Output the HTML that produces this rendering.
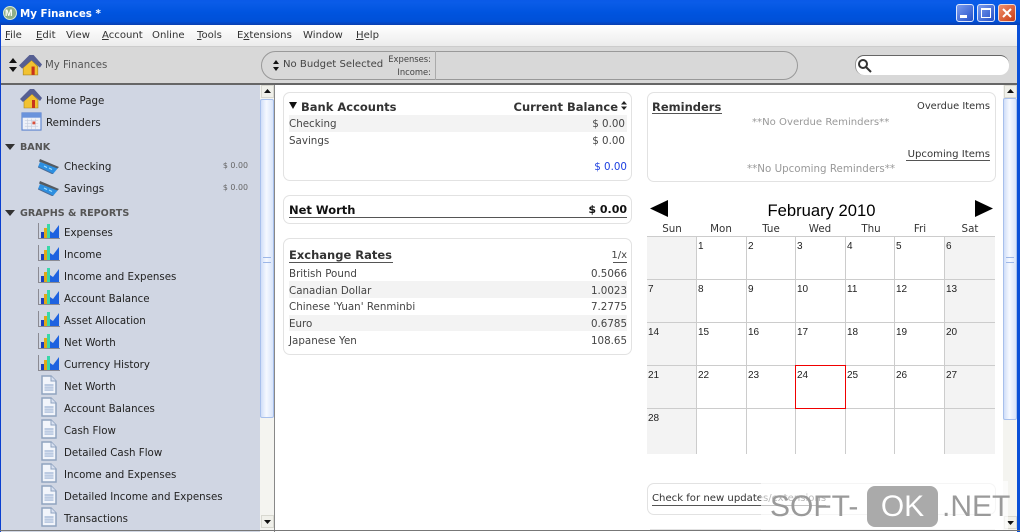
<!DOCTYPE html>
<html><head><meta charset="utf-8"><style>
html,body{margin:0;padding:0;width:1020px;height:532px;overflow:hidden;background:#fff}
body{position:relative;font:11px/14px "DejaVu Sans","Liberation Sans",sans-serif;color:#333}
.a,.t,.r{position:absolute;white-space:nowrap}
.t{height:14px}
.r{text-align:right}
.b{font-weight:bold}
.card{position:absolute;background:#fff;border:1px solid #e2e2e2;border-radius:7px;box-sizing:border-box}
.s{color:#222;font-size:10.25px}
.x{color:#444;font-size:10.3px}
.v{color:#666;font-size:7.9px}
.rule{position:absolute;height:1px;background:#555}
.sh{position:absolute;background:#f3f3f3}
.ic{position:absolute}
.d{position:absolute;font:10px/12px "Liberation Sans",sans-serif;color:#222}
.h{position:absolute;width:50px;text-align:center;font-size:10.3px;color:#333;top:222px}
.m{top:29px;color:#333;font-size:10.1px}
.sbtn{position:absolute;width:13px;height:13px;background:#f0f0ea;border:1px solid #d8d8d0;box-sizing:border-box}
.thumb{position:absolute;background:linear-gradient(90deg,#d0def8,#f6f9ff 45%,#d8e4fa);border:1px solid #a8c0ec;box-sizing:border-box;border-radius:2px}
.red{position:absolute;background:#f00000}
</style></head><body>
<svg width="0" height="0" style="position:absolute"><defs>
<symbol id="house" viewBox="0 0 22 22"><path d="M4 13 12 6 18 12V20H4Z" fill="#f2c230" stroke="#a8841e" stroke-width=".6"/><rect x="12" y="12" width="3" height="8" fill="#c8321c"/><path d="M0 11 10 1H14L22 10 20 13 12 6 3 14Z" fill="#565f92"/></symbol>
<symbol id="cal" viewBox="0 0 22 20"><rect x="1" y="1" width="20" height="18" fill="#eef1f8" stroke="#5f86d0" stroke-width="1.2"/><rect x="1" y="1" width="20" height="5" fill="#6a93dc"/><path d="M4 9H18M4 12H18M4 15H18M7 7V18M11 7V18M15 7V18" stroke="#c7cfdf" stroke-width=".7"/><rect x="12" y="10" width="3" height="3" fill="#d8503c"/></symbol>
<symbol id="bank" viewBox="0 0 22 16"><path d="M2 4 20 10 15 16 0 9Z" fill="#2d8fe0"/><path d="M2 1 21 9 19.500 10.500 1 3.500Z" fill="#555b60"/><path d="M6 8l3 1.500M11 10l3 1.500" stroke="#9fe0ff" stroke-width="1.200"/><path d="M0 9 15 16" stroke="#4d6c96" stroke-width="1"/></symbol>
<symbol id="chart" viewBox="0 0 22 16"><path d="M.5 0V15.500H22" fill="none" stroke="#8a8a92"/><rect x="3" y="9" width="3" height="6" fill="#1c3fc0"/><rect x="6" y="5" width="3" height="10" fill="#e0a818"/><rect x="9" y="1" width="3" height="14" fill="#38d8a8"/><path d="M12 15V8L15 10 21 2V15Z" fill="#1e62e0"/></symbol>
<symbol id="doc" viewBox="0 0 16 20"><path d="M1 1H10L15 6V19H1Z" fill="#f2f5fb" stroke="#8fa3c0" stroke-width="1.500"/><path d="M10 1V6H15" fill="#d8e0f0" stroke="#8fa3c0"/><rect x="3.500" y="9" width="9" height="7" fill="#bccbe2"/><path d="M3.500 11.500H12.500M3.500 14H12.500" stroke="#e8eef8" stroke-width=".6"/></symbol>
</defs></svg>

<!-- title bar -->
<div class="a" style="left:0;top:0;width:1020px;height:25px;background:linear-gradient(180deg,#0a5ae8 0,#0a5ce8 10%,#0054df 50%,#0050d8 85%,#0a3fb0 100%)"></div>
<div class="a" style="left:3px;top:6px;width:12px;height:12px;border-radius:50%;background:#8fae88;border:1px solid #d8e8d0"></div>
<div class="t" style="left:5px;top:7px;color:#fff;font:bold 9px/12px 'Liberation Sans',sans-serif;">M</div>
<div class="t b" style="left:20px;top:7px;color:#fff;font:bold 10.3px/14px 'DejaVu Sans',sans-serif">My Finances *</div>
<div class="a" style="left:956px;top:4px;width:18px;height:18px;border:1px solid #dfe8fb;border-radius:3px;box-sizing:border-box;background:linear-gradient(135deg,#7c9cee,#2450c8)"></div>
<div class="a" style="left:960px;top:15px;width:7px;height:3px;background:#fff"></div>
<div class="a" style="left:977px;top:4px;width:18px;height:18px;border:1px solid #dfe8fb;border-radius:3px;box-sizing:border-box;background:linear-gradient(135deg,#7c9cee,#2450c8)"></div>
<div class="a" style="left:981px;top:8px;width:10px;height:10px;border:1px solid #fff;border-top-width:2px;box-sizing:border-box"></div>
<div class="a" style="left:998px;top:4px;width:18px;height:18px;border:1px solid #f0d8d0;border-radius:3px;box-sizing:border-box;background:linear-gradient(135deg,#f0906c,#c83c14)"></div>
<svg class="ic" style="left:1002px;top:8px" width="10" height="10"><path d="M1 1 9 9M9 1 1 9" stroke="#fff" stroke-width="2"/></svg>

<!-- menu -->
<div class="a" style="left:0;top:25px;width:1020px;height:21px;background:linear-gradient(180deg,#fff,#ececec);border-bottom:1px solid #ccc"></div>
<div class="t m" style="left:5px"><u>F</u>ile</div>
<div class="t m" style="left:36px"><u>E</u>dit</div>
<div class="t m" style="left:66px">View</div>
<div class="t m" style="left:102px"><u>A</u>ccount</div>
<div class="t m" style="left:152px">Online</div>
<div class="t m" style="left:197px"><u>T</u>ools</div>
<div class="t m" style="left:237px">E<u>x</u>tensions</div>
<div class="t m" style="left:303px">Window</div>
<div class="t m" style="left:356px"><u>H</u>elp</div>

<!-- toolbar -->
<div class="a" style="left:0;top:47px;width:1020px;height:36px;background:#d8d8d8;border-bottom:2px solid #666;box-sizing:content-box"></div>
<svg class="ic" style="left:9px;top:58px" width="8" height="14"><path d="M4 0 8 5H0ZM4 14 0 9H8Z" fill="#111"/></svg>
<svg class="ic" style="left:19px;top:54px" width="23" height="23"><use href="#house"/></svg>
<div class="t" style="left:45px;top:59px;font-size:10.2px;color:#555">My Finances</div>
<div class="a" style="left:261px;top:51px;width:537px;height:29px;border:1px solid #999;border-radius:15px;box-sizing:border-box;background:#d8d8d8"></div>
<svg class="ic" style="left:273px;top:60px" width="6" height="11"><path d="M3 0 6 4H0ZM3 11 0 7H6Z" fill="#111"/></svg>
<div class="t" style="left:283px;top:58px;font-size:10.1px;color:#444">No Budget Selected</div>
<div class="r" style="left:385px;width:46px;top:53px;font-size:8.400px;line-height:12px;color:#444">Expenses:</div>
<div class="r" style="left:385px;width:46px;top:66px;font-size:8.400px;line-height:12px;color:#444">Income:</div>
<div class="a" style="left:435px;top:51px;width:1px;height:29px;background:#aaa"></div>
<div class="a" style="left:855px;top:55px;width:154px;height:20px;background:#fff;border-radius:9px;border-top:1px solid #666;border-left:1px solid #999;box-sizing:border-box"></div>
<svg class="ic" style="left:857px;top:58px" width="15" height="15"><circle cx="6" cy="6" r="4" fill="none" stroke="#333" stroke-width="2"/><path d="M9 9 14 14" stroke="#333" stroke-width="2"/></svg>

<!-- sidebar -->
<div class="a" style="left:0;top:85px;width:260px;height:447px;background:#d0d6e3"></div>
<svg class="ic" style="left:20px;top:88px" width="22" height="22"><use href="#house"/></svg>
<div class="t s" style="left:46px;top:94px">Home Page</div>
<svg class="ic" style="left:21px;top:112px" width="21" height="19"><use href="#cal"/></svg>
<div class="t s" style="left:46px;top:116px">Reminders</div>
<svg class="ic" style="left:5px;top:144px" width="10" height="7"><path d="M0 0H10L5 6Z" fill="#333"/></svg>
<div class="t b" style="left:20px;top:141px;font-size:9.600px;color:#555">BANK</div>
<svg class="ic" style="left:38px;top:158px" width="22" height="16"><use href="#bank"/></svg>
<div class="t s" style="left:64px;top:160px">Checking</div>
<div class="r v" style="left:200px;width:48px;top:159px">$ 0.00</div>
<svg class="ic" style="left:38px;top:180px" width="22" height="16"><use href="#bank"/></svg>
<div class="t s" style="left:64px;top:182px">Savings</div>
<div class="r v" style="left:200px;width:48px;top:181px">$ 0.00</div>
<svg class="ic" style="left:5px;top:210px" width="10" height="7"><path d="M0 0H10L5 6Z" fill="#333"/></svg>
<div class="t b" style="left:20px;top:207px;font-size:9.600px;color:#555">GRAPHS &amp; REPORTS</div>

<svg class="ic" style="left:38px;top:223px" width="22" height="16"><use href="#chart"/></svg><div class="t s" style="left:64px;top:226px">Expenses</div>
<svg class="ic" style="left:38px;top:245px" width="22" height="16"><use href="#chart"/></svg><div class="t s" style="left:64px;top:248px">Income</div>
<svg class="ic" style="left:38px;top:267px" width="22" height="16"><use href="#chart"/></svg><div class="t s" style="left:64px;top:270px">Income and Expenses</div>
<svg class="ic" style="left:38px;top:289px" width="22" height="16"><use href="#chart"/></svg><div class="t s" style="left:64px;top:292px">Account Balance</div>
<svg class="ic" style="left:38px;top:311px" width="22" height="16"><use href="#chart"/></svg><div class="t s" style="left:64px;top:314px">Asset Allocation</div>
<svg class="ic" style="left:38px;top:333px" width="22" height="16"><use href="#chart"/></svg><div class="t s" style="left:64px;top:336px">Net Worth</div>
<svg class="ic" style="left:38px;top:355px" width="22" height="16"><use href="#chart"/></svg><div class="t s" style="left:64px;top:358px">Currency History</div>
<svg class="ic" style="left:41px;top:375px" width="16" height="20"><use href="#doc"/></svg><div class="t s" style="left:64px;top:380px">Net Worth</div>
<svg class="ic" style="left:41px;top:397px" width="16" height="20"><use href="#doc"/></svg><div class="t s" style="left:64px;top:402px">Account Balances</div>
<svg class="ic" style="left:41px;top:419px" width="16" height="20"><use href="#doc"/></svg><div class="t s" style="left:64px;top:424px">Cash Flow</div>
<svg class="ic" style="left:41px;top:441px" width="16" height="20"><use href="#doc"/></svg><div class="t s" style="left:64px;top:446px">Detailed Cash Flow</div>
<svg class="ic" style="left:41px;top:463px" width="16" height="20"><use href="#doc"/></svg><div class="t s" style="left:64px;top:468px">Income and Expenses</div>
<svg class="ic" style="left:41px;top:485px" width="16" height="20"><use href="#doc"/></svg><div class="t s" style="left:64px;top:490px">Detailed Income and Expenses</div>
<svg class="ic" style="left:41px;top:507px" width="16" height="20"><use href="#doc"/></svg><div class="t s" style="left:64px;top:512px">Transactions</div>

<!-- left scrollbar -->
<div class="a" style="left:260px;top:85px;width:14px;height:445px;background:#f4f4f0"></div>
<div class="sbtn" style="left:261px;top:85px"></div>
<svg class="ic" style="left:264px;top:89px" width="7" height="5"><path d="M3.500 0 7 4H0Z" fill="#111"/></svg>
<div class="thumb" style="left:260px;top:99px;width:14px;height:319px"></div>
<div class="a" style="left:263px;top:257px;width:8px;height:4px;border-top:1px solid #9db7e8;border-bottom:1px solid #9db7e8"></div>
<div class="sbtn" style="left:261px;top:515px"></div>
<svg class="ic" style="left:264px;top:520px" width="7" height="5"><path d="M0 0H7L3.500 4Z" fill="#111"/></svg>
<div class="a" style="left:274px;top:85px;width:1px;height:447px;background:#888"></div>

<!-- bank accounts card -->
<div class="card" style="left:283px;top:92px;width:349px;height:89px"></div>
<svg class="ic" style="left:289px;top:102px" width="8" height="7"><path d="M0 0H8L4 7Z" fill="#111"/></svg>
<div class="t b" style="left:301px;top:100px;font-size:11.500px">Bank Accounts</div>
<div class="r b" style="left:480px;width:138px;top:100px;font-size:11.500px">Current Balance</div>
<svg class="ic" style="left:621px;top:101px" width="6" height="9"><path d="M3 0 6 3.500H0ZM3 9 0 5.500H6Z" fill="#222"/></svg>
<div class="sh" style="left:289px;top:115px;width:338px;height:17px"></div>
<div class="t x" style="left:289px;top:117px">Checking</div>
<div class="r x" style="left:540px;width:85px;top:117px">$ 0.00</div>
<div class="t x" style="left:289px;top:134px">Savings</div>
<div class="r x" style="left:540px;width:85px;top:134px">$ 0.00</div>
<div class="r x" style="left:540px;width:87px;top:160px;color:#1c3fe0">$ 0.00</div>

<!-- net worth -->
<div class="card" style="left:283px;top:195px;width:349px;height:29px"></div>
<div class="t b" style="left:289px;top:203px;font-size:11.500px;color:#111">Net Worth</div>
<div class="r b" style="left:540px;width:87px;top:203px;font-size:11px;color:#111">$ 0.00</div>
<div class="rule" style="left:289px;top:217px;width:338px"></div>

<!-- exchange rates -->
<div class="card" style="left:283px;top:238px;width:349px;height:117px"></div>
<div class="t b" style="left:289px;top:248px;font-size:11.500px">Exchange Rates</div>
<div class="rule" style="left:289px;top:262px;width:104px"></div>
<div class="r" style="left:590px;width:37px;top:249px;font-size:10px;color:#444">1/x</div>
<div class="rule" style="left:613px;top:262px;width:14px"></div>
<div class="sh" style="left:289px;top:281px;width:338px;height:17px"></div>
<div class="sh" style="left:289px;top:315px;width:338px;height:16px"></div>
<div class="t x" style="left:289px;top:267px">British Pound</div><div class="r x" style="left:540px;width:87px;top:267px">0.5066</div>
<div class="t x" style="left:289px;top:284px">Canadian Dollar</div><div class="r x" style="left:540px;width:87px;top:284px">1.0023</div>
<div class="t x" style="left:289px;top:300px">Chinese 'Yuan' Renminbi</div><div class="r x" style="left:540px;width:87px;top:300px">7.2775</div>
<div class="t x" style="left:289px;top:317px">Euro</div><div class="r x" style="left:540px;width:87px;top:317px">0.6785</div>
<div class="t x" style="left:289px;top:334px">Japanese Yen</div><div class="r x" style="left:540px;width:87px;top:334px">108.65</div>

<!-- reminders -->
<div class="card" style="left:647px;top:92px;width:349px;height:90px"></div>
<div class="t b" style="left:652px;top:100px;font-size:11.500px">Reminders</div>
<div class="rule" style="left:652px;top:113px;width:70px"></div>
<div class="r" style="left:880px;width:110px;top:100px;font-size:9.900px;color:#333">Overdue Items</div>
<div class="t" style="left:752px;top:116px;font-size:10.1px;color:#999">**No Overdue Reminders**</div>
<div class="r" style="left:880px;width:110px;top:148px;font-size:10.1px;color:#333">Upcoming Items</div>
<div class="rule" style="left:906px;top:160px;width:84px"></div>
<div class="t" style="left:747px;top:162px;font-size:10.3px;color:#999">**No Upcoming Reminders**</div>

<!-- calendar -->
<svg class="ic" style="left:650px;top:200px" width="18" height="17"><path d="M18 0V17L0 8.500Z" fill="#000"/></svg>
<svg class="ic" style="left:975px;top:200px" width="18" height="17"><path d="M0 0V17L18 8.500Z" fill="#000"/></svg>
<div class="a" style="left:647px;width:349px;top:202px;text-align:center;font:16.600px/18px 'Liberation Sans',sans-serif;color:#000">February 2010</div>
<div class="h" style="left:647px">Sun</div><div class="h" style="left:696px">Mon</div><div class="h" style="left:746px">Tue</div><div class="h" style="left:795px">Wed</div><div class="h" style="left:846px">Thu</div><div class="h" style="left:895px">Fri</div><div class="h" style="left:945px">Sat</div>
<div class="sh" style="left:647px;top:236px;width:49px;height:218px"></div>
<div class="sh" style="left:945px;top:236px;width:50px;height:218px"></div>
<div class="a" style="left:647px;top:236px;width:348px;height:1px;background:#ccc"></div>
<div class="a" style="left:647px;top:279px;width:348px;height:1px;background:#ccc"></div>
<div class="a" style="left:647px;top:322px;width:348px;height:1px;background:#ccc"></div>
<div class="a" style="left:647px;top:365px;width:348px;height:1px;background:#ccc"></div>
<div class="a" style="left:647px;top:408px;width:348px;height:1px;background:#ccc"></div>
<div class="a" style="left:696px;top:236px;width:1px;height:218px;background:#ccc"></div>
<div class="a" style="left:746px;top:236px;width:1px;height:218px;background:#ccc"></div>
<div class="a" style="left:795px;top:236px;width:1px;height:218px;background:#ccc"></div>
<div class="a" style="left:845px;top:236px;width:1px;height:218px;background:#ccc"></div>
<div class="a" style="left:894px;top:236px;width:1px;height:218px;background:#ccc"></div>
<div class="a" style="left:944px;top:236px;width:1px;height:218px;background:#ccc"></div>
<div class="red" style="left:795px;top:365px;width:51px;height:1px"></div>
<div class="red" style="left:795px;top:408px;width:51px;height:1px"></div>
<div class="red" style="left:795px;top:365px;width:1px;height:44px"></div>
<div class="red" style="left:845px;top:365px;width:1px;height:44px"></div>
<div class="d" style="left:698px;top:241px">1</div><div class="d" style="left:748px;top:241px">2</div><div class="d" style="left:797px;top:241px">3</div><div class="d" style="left:847px;top:241px">4</div><div class="d" style="left:896px;top:241px">5</div><div class="d" style="left:946px;top:241px">6</div>
<div class="d" style="left:648px;top:284px">7</div><div class="d" style="left:698px;top:284px">8</div><div class="d" style="left:748px;top:284px">9</div><div class="d" style="left:797px;top:284px">10</div><div class="d" style="left:847px;top:284px">11</div><div class="d" style="left:896px;top:284px">12</div><div class="d" style="left:946px;top:284px">13</div>
<div class="d" style="left:648px;top:327px">14</div><div class="d" style="left:698px;top:327px">15</div><div class="d" style="left:748px;top:327px">16</div><div class="d" style="left:797px;top:327px">17</div><div class="d" style="left:847px;top:327px">18</div><div class="d" style="left:896px;top:327px">19</div><div class="d" style="left:946px;top:327px">20</div>
<div class="d" style="left:648px;top:370px">21</div><div class="d" style="left:698px;top:370px">22</div><div class="d" style="left:748px;top:370px">23</div><div class="d" style="left:797px;top:370px">24</div><div class="d" style="left:847px;top:370px">25</div><div class="d" style="left:896px;top:370px">26</div><div class="d" style="left:946px;top:370px">27</div>
<div class="d" style="left:648px;top:413px">28</div>

<!-- updates card -->
<div class="card" style="left:647px;top:483px;width:349px;height:32px"></div>
<div class="t" style="left:652px;top:492px;font-size:10.1px;color:#333">Check for new updates/extensions</div>
<div class="rule" style="left:652px;top:505px;width:174px"></div>
<div class="a" style="left:650px;top:529px;width:345px;height:3px;border-top:1px solid #e2e2e2"></div>

<!-- right scrollbar -->
<div class="a" style="left:1003px;top:85px;width:14px;height:445px;background:#f4f4f0"></div>
<div class="sbtn" style="left:1004px;top:85px"></div>
<svg class="ic" style="left:1007px;top:89px" width="7" height="5"><path d="M3.500 0 7 4H0Z" fill="#111"/></svg>
<div class="thumb" style="left:1003px;top:98px;width:14px;height:322px"></div>
<div class="a" style="left:1006px;top:257px;width:8px;height:4px;border-top:1px solid #9db7e8;border-bottom:1px solid #9db7e8"></div>
<div class="sbtn" style="left:1004px;top:516px"></div>
<svg class="ic" style="left:1007px;top:521px" width="7" height="5"><path d="M0 0H7L3.500 4Z" fill="#111"/></svg>

<!-- watermark -->
<div class="a" style="left:761px;top:481px;width:247px;height:51px;background:rgba(255,255,255,.65)"></div>
<div class="t" style="left:770px;top:490px;height:34px;font:30px/34px 'Liberation Sans',sans-serif;color:#9a9a9a">SOFT-</div>
<div class="a" style="left:867px;top:486px;width:71px;height:41px;background:#aaa;border-radius:8px;text-align:center;font:30px/41px 'Liberation Sans',sans-serif;color:#fff">OK</div>
<div class="t" style="left:942px;top:490px;height:34px;font:30px/34px 'Liberation Sans',sans-serif;color:#9a9a9a">.NET</div>

<!-- window frame -->
<div class="a" style="left:0;top:25px;width:1px;height:507px;background:#0a3fd0"></div>
<div class="a" style="left:1017px;top:25px;width:3px;height:507px;background:#0a50d8"></div>
<div class="a" style="left:0;top:530px;width:1020px;height:1px;background:#777"></div>
</body></html>
